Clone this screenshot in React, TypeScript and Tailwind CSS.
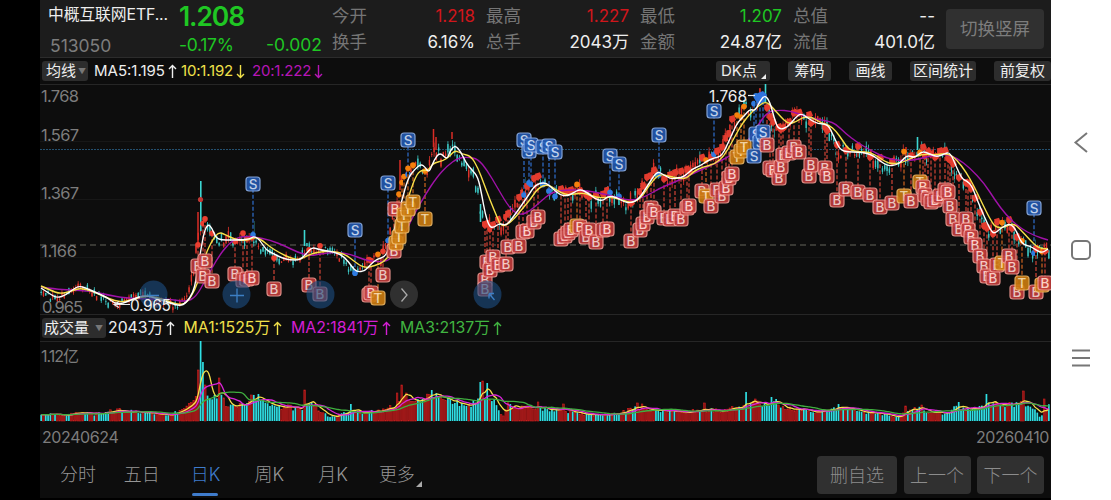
import type { ReactNode } from 'react';

type Point = [number, number];

const LEFT = 40;
const RIGHT = 1050;
const COUNT = 437;
const STEP = (RIGHT - LEFT) / COUNT;

// y positions of the moving averages along the time axis
const MA5 = '41,288 50,294 57,298 66,295 72,290 79,286 86,288 97,293 108,298 114,303 122,304 133,299 145,295 158,299 170,303 180,306 186,303 193,293 196,280 200,255 204,232 208,224 212,228 216,238 222,240 230,240 240,240 250,239 254,236 260,240 266,250 274,254 282,258 290,260 300,260 306,254 312,247 320,250 335,252 345,257 352,267 357,272 365,271 371,264 377,259 385,257 390,246 396,222 402,200 408,178 415,169 421,164 425,167 429,173 434,160 440,152 447,160 450,151 455,145 461,152 466,163 472,170 478,177 482,196 485,213 489,226 493,228 500,223 506,226 514,216 521,206 528,196 535,185 545,182 552,188 560,195 567,196 573,193 580,189 588,193 595,199 603,201 608,196 616,197 624,202 631,203 639,199 648,185 657,171 664,175 671,179 677,178 684,177 692,169 700,166 707,161 714,158 722,156 729,141 737,123 745,115 750,109 755,111 760,101 765,95 770,102 775,121 779,130 788,127 795,118 801,113 809,119 818,124 828,124 834,137 840,150 848,152 858,152 866,153 874,156 880,161 888,166 896,165 901,162 907,155 915,158 922,151 930,154 937,157 944,154 950,152 956,166 962,179 967,181 972,186 978,202 984,216 990,229 994,234 1000,229 1006,225 1011,224 1016,230 1020,240 1024,245 1030,246 1036,250 1042,253 1048,249';
const MA10 = '41,286 50,290 60,294 72,291 80,288 92,291 103,296 115,301 125,302 140,297 152,296 165,300 178,305 187,303 195,290 200,275 206,253 213,239 219,232 226,235 234,239 245,241 255,237 262,240 270,247 280,253 290,258 300,260 308,255 318,252 332,251 345,254 355,262 364,268 374,266 384,262 391,253 398,231 406,205 414,180 420,170 428,171 433,163 443,161 450,156 455,150 462,154 471,156 478,168 484,184 490,200 497,217 501,226 507,225 515,218 522,209 530,200 538,188 548,184 556,190 566,195 574,194 584,193 592,196 600,198 612,197 625,201 633,203 642,197 650,184 659,174 668,176 677,178 686,179 694,171 703,167 715,164 724,156 732,142 740,127 748,116 757,107 766,101 773,108 780,116 788,124 796,122 803,117 812,117 821,123 829,125 836,131 843,141 849,150 860,152 870,152 880,158 889,164 902,163 911,158 923,154 935,155 948,153 957,160 966,172 974,186 982,203 990,219 996,228 1006,227 1013,223 1020,229 1030,240 1038,248 1048,249';
const MA20 = '41,287 55,289 70,290 90,291 108,295 125,298 150,299 170,299 186,302 196,297 206,279 217,259 228,244 240,236 255,237 270,240 285,246 297,252 310,256 320,254 335,252 350,254 362,259 375,262 390,261 400,245 412,218 425,195 437,177 447,166 458,158 468,157 478,159 487,170 497,187 507,204 514,212 521,215 530,211 540,202 552,192 565,190 580,190 595,192 612,196 630,201 645,197 660,188 675,182 690,175 705,168 718,162 732,155 745,145 757,127 767,112 779,110 790,111 802,115 815,119 828,121 836,124 845,133 858,143 872,151 886,158 900,161 915,160 930,156 945,154 957,158 970,168 984,183 995,200 1006,215 1020,228 1035,236 1048,240';

const VOLUME = '41,7 60,6 80,8 95,7 110,11 120,11 135,9 150,8 160,7 170,6 178,10 186,15 190,20 195,28 206,34 210,29 214,26 218,23 223,24 228,14 238,14 245,20 253,24 262,21 275,15 290,14 300,11 310,18 320,10 330,4 340,7 350,9 370,9 385,13 395,16 399,24 405,24 415,22 425,26 436,26 445,20 455,21 465,15 475,19 480,20 493,22 497,18 502,3 508,17 518,14 530,13 545,13 560,11 575,8 590,6 605,7 620,8 637,14 650,11 665,11 680,8 690,11 705,12 720,10 735,14 745,15 760,18 772,20 785,12 800,12 815,9 830,11 840,14 855,10 870,8 885,7 895,4 905,8 918,13 930,9 945,8 957,14 970,12 980,13 990,20 1000,14 1012,16 1025,18 1035,13 1040,4 1048,16';

// Tall bars, marked r for a rising day and g for a falling one
const VOLUME_PEAKS: Record<number, [number, 'r' | 'g']> = {
  68: [51, 'r'], 69: [80, 'g'], 70: [59, 'g'], 71: [36, 'r'], 77: [43, 'r'], 91: [26, 'r'],
  94: [27, 'g'], 114: [31, 'r'], 134: [17, 'g'], 154: [28, 'r'], 156: [36, 'r'], 169: [31, 'g'],
  171: [28, 'g'], 190: [39, 'g'], 191: [40, 'r'], 193: [38, 'g'], 215: [19, 'r'], 226: [17, 'r'],
  258: [18, 'r'], 260: [17, 'r'], 287: [18, 'r'], 305: [29, 'g'], 309: [22, 'r'], 316: [24, 'g'],
  318: [22, 'g'], 345: [17, 'g'], 374: [15, 'r'], 381: [16, 'r'], 397: [19, 'g'], 409: [27, 'g'],
  425: [30, 'r'], 434: [22, 'r'],
};

const parse = (s: string): Point[] => s.split(' ').map((p) => p.split(',').map(Number) as Point);

const valueAt = (pts: Point[], x: number) => {
  if (x <= pts[0][0]) return pts[0][1];
  for (let i = 1; i < pts.length; i++) {
    if (x <= pts[i][0]) {
      const [x0, y0] = pts[i - 1];
      const [x1, y1] = pts[i];
      return y0 + ((y1 - y0) * (x - x0)) / (x1 - x0);
    }
  }
  return pts[pts.length - 1][1];
};

const smooth = (pts: Point[]) => {
  let d = `M${pts[0][0]} ${pts[0][1]}`;
  for (let i = 1; i < pts.length - 1; i++) {
    const mx = (pts[i][0] + pts[i + 1][0]) / 2;
    const my = (pts[i][1] + pts[i + 1][1]) / 2;
    d += `Q${pts[i][0]} ${pts[i][1]} ${mx} ${my}`;
  }
  const last = pts[pts.length - 1];
  return `${d}L${last[0]} ${last[1]}`;
};

const rand = (n: number) => {
  const v = Math.sin(n * 127.1 + 11.7) * 43758.5453;
  return v - Math.floor(v);
};

const ma5 = parse(MA5);
const ma10 = parse(MA10);
const ma20 = parse(MA20);
const volumePts = parse(VOLUME);

const priceAt = (x: number) => valueAt(ma5, x + 4);

const candles = Array.from({ length: COUNT }, (_, i) => {
  const x = LEFT + (i + 0.5) * STEP;
  const slope = priceAt(x + 3) - priceAt(x - 3);
  const calm = x < 190 || (x > 255 && x < 380) ? 0.6 : 0.95;
  const mid = priceAt(x) + (rand(i) - 0.5) * 13 * calm;
  const body = (0.6 + rand(i + 900) * 4) * calm;
  const wick = body + rand(i + 1800) * 5 * calm;
  const up = rand(i + 2700) - slope * 0.04 > 0.5;
  return { x, mid, body, wick, up };
});

const volumes = candles.map((c, i) => {
  const peak = VOLUME_PEAKS[i];
  return peak ? peak[0] : valueAt(volumePts, c.x) * (0.78 + rand(i + 5000) * 0.4);
});

const average = (n: number): Point[] =>
  volumes.map((_, i) => {
    const part = volumes.slice(Math.max(0, i - n + 1), i + 1);
    return [candles[i].x, 421 - part.reduce((a, b) => a + b, 0) / part.length];
  });

const SELL = '253,184 355,230 388,183 408,140 524,140 529,151 531,145 543,147 549,146 555,152 610,156 619,164 659,135 714,111 756,134 760,142 763,132 754,156 1034,208';
const BUY = '198,266 205,261 203,276 212,281 235,274 243,280 247,279 252,278 274,289 309,285 320,294 369,295 371,293 383,275 394,251 395,209 485,280 485,289 487,262 490,270 493,257 498,265 506,264 508,247 519,246 523,232 527,231 534,222 538,217 561,239 565,236 568,233 571,230 580,227 586,237 589,230 596,242 603,230 607,229 631,241 640,230 643,224 647,217 651,208 654,212 664,218 670,219 675,216 681,219 687,208 689,206 702,191 711,206 717,190 722,196 726,188 729,178 732,174 767,145 770,168 773,170 779,178 781,167 783,155 789,153 794,147 799,152 809,176 811,165 825,168 827,176 837,200 846,189 858,192 870,195 880,207 892,203 911,201 923,187 925,195 928,199 931,202 935,200 940,196 945,190 948,192 950,206 953,219 959,229 966,219 968,230 971,237 975,245 980,256 984,266 987,276 993,278 997,265 1009,256 1012,267 1017,292 1036,292 1045,283';
const TRADE = '378,298 396,243 399,237 402,226 404,215 408,209 413,202 425,219 577,226 706,196 737,157 741,151 744,147 904,196 920,182 1002,263 1022,283 1042,285';

const STYLES = {
  S: { fill: '#2459b0', edge: '#8fb2ea', text: '#d3e3ff', dot: '#2f7be0', dash: '#2f6fcf' },
  B: { fill: '#c23c3c', edge: '#f29a92', text: '#ffd8d2', dot: '#ea3f30', dash: '#cf4336' },
  T: { fill: '#cc7c10', edge: '#f0b863', text: '#ffe3b0', dot: '#f5800c', dash: '#cf641f' },
};

const markers = [
  ...parse(SELL).map(([x, y]) => ({ kind: 'S' as const, x, y })),
  ...parse(BUY).map(([x, y]) => ({ kind: 'B' as const, x, y })),
  ...parse(TRADE).map(([x, y]) => ({ kind: 'T' as const, x, y })),
].sort((a, b) => a.x - b.x);

const PriceChart = () => (
  <svg className="block" width="1011" height="231" viewBox="40 84 1011 231">
    {[84.5, 141.5, 199.5, 257.5, 314.5].map((y) => (
      <line key={y} x1="40" x2="1051" y1={y} y2={y} stroke={y === 84.5 || y === 314.5 ? '#262626' : '#171717'} />
    ))}
    <line x1="40" x2="1051" y1="149.5" y2="149.5" stroke="#24506f" strokeDasharray="2 1" />
    <line x1="40" x2="1051" y1="245" y2="245" stroke="#66665c" strokeDasharray="6 4" />

    {/* Candles */}
    {candles.map((c, i) => (
      <g key={i} fill={c.up ? '#e0332b' : '#3cc7c4'}>
        <rect x={c.x - 0.4} y={c.mid - c.wick} width="0.8" height={c.wick * 2} />
        <rect x={c.x - 0.7} y={c.mid - c.body} width="1.4" height={c.body * 2} />
      </g>
    ))}
    <path d="M200.8 181V231M253.5 221V236M304.5 230V246M765.5 84V103M744 100V112M480.5 204V222M524.5 177V195M917.5 137V150" stroke="#3cd6d2" strokeWidth="1.6" />
    <path d="M198 212V247M433.5 129V147M452 132V139M436 137V150M400 160V190M906 147V158" stroke="#d92c26" strokeWidth="1.5" />

    {/* Signal lines and dots */}
    {markers.map((m, i) => {
      const y = priceAt(m.x) + (rand(i + 300) - 0.7) * 9;
      const s = STYLES[m.kind];
      return (
        <g key={i}>
          <line x1={m.x} x2={m.x} y1={y} y2={m.y} stroke="#0d0d0d" strokeWidth="2" />
          <line x1={m.x} x2={m.x} y1={y} y2={m.y} stroke={s.dash} strokeWidth="1.2" strokeDasharray="4 2" />
          <circle cx={m.x} cy={y} r="2.8" fill={s.dot} />
          {m.kind === 'B' && m.x > 480 && (
            <path d={`M${m.x - 3} ${y - 3}l5-1.5 2 5-5 3z`} fill="#e23b2e" />
          )}
        </g>
      );
    })}
    <circle cx="200.5" cy="199.5" r="2.6" fill="#c23a35" />
    <path d="M754 98l4-5 5-2 4 4-3 7-6 3z" fill="#2f73dc" />

    {/* Averages */}
    <g fill="none" strokeWidth="1.4">
      <path d={smooth(ma20)} stroke="#a012a8" />
      <path d={smooth(ma10)} stroke="#f7e04a" />
      <path d={smooth(ma5)} stroke="#fff" />
    </g>

    {/* Signal badges */}
    {markers.map((m, i) => {
      const s = STYLES[m.kind];
      return (
        <g key={i} opacity="0.9">
          <rect x={m.x - 7} y={m.y - 7} width="14" height="14" rx="3" fill={s.fill} stroke={s.edge} strokeWidth="1.2" />
          <text x={m.x} y={m.y + 4.8} textAnchor="middle" fontSize="13.5" fontWeight="500" fill={s.text}>{m.kind}</text>
        </g>
      );
    })}

    {/* Floating controls */}
    <g fill="#1d4c80" opacity="0.62">
      <circle cx="153.5" cy="294.5" r="14" />
      <circle cx="236.5" cy="294.5" r="14" />
      <circle cx="320.5" cy="294.5" r="14" />
      <circle cx="487.5" cy="294.5" r="14" />
    </g>
    <circle cx="404" cy="294.5" r="14" fill="#333" opacity="0.92" />
    <path d="M401.5 288.5l5.5 6.500-5.5 6.500" fill="none" stroke="#aaa" strokeWidth="1.3" />
    <path d="M148 295.5h11M230 295.5h14M237 288.5v14M489 293.5h5M489 293.5v5M489 293.5l5.5 6.500" fill="none" stroke="#3d7fc4" strokeWidth="1.3" />

    {/* High and low labels */}
    <g fill="none" stroke="#e8e8e8" strokeWidth="1.2">
      <path d="M748 95.5h7" />
      <path d="M114 304.5h16M119 301.5l-5 3 5 3" />
    </g>
    <text x="709" y="101.5" fontSize="15.5" textLength="38" fill="#eee">1.768</text>
    <text x="130" y="310.5" fontSize="15.5" textLength="41" fill="#eee">0.965</text>

    {/* Price scale */}
    <g fontSize="16.5" fill="#7d7d7d">
      <text x="41" y="102" textLength="38">1.768</text>
      <text x="41" y="141" textLength="38">1.567</text>
      <text x="41" y="199" textLength="38">1.367</text>
      <text x="41" y="257" textLength="36">1.166</text>
      <text x="42" y="313" textLength="41">0.965</text>
    </g>
  </svg>
);

const VolumeChart = () => (
  <svg className="block" width="1011" height="81" viewBox="40 341 1011 81">
    <line x1="40" x2="1051" y1="341.5" y2="341.5" stroke="#262626" />
    {candles.map((c, i) => {
      const up = VOLUME_PEAKS[i] ? VOLUME_PEAKS[i][1] === 'r' : c.up;
      const h = volumes[i];
      return up ? (
        <rect key={i} x={c.x - 0.8} y={421 - h} width="1.6" height={h} fill="#8f1515" stroke="#c91f1f" strokeWidth="0.6" />
      ) : (
        <rect key={i} x={c.x - 0.85} y={421 - h} width="1.7" height={h} fill="#2fdfe4" />
      );
    })}
    <g fill="none" strokeWidth="1.3">
      <path d={smooth(average(5))} stroke="#f7e04a" />
      <path d={smooth(average(10))} stroke="#d824d8" />
      <path d={smooth(average(20))} stroke="#3fae3f" />
    </g>
    <text x="41" y="362" fontSize="16" textLength="38" fill="#7d7d7d">1.12亿</text>
  </svg>
);

const Arrow = ({ down = false }: { down?: boolean }) => (
  <svg className={down ? 'ml-[3px] rotate-180' : 'ml-[3px]'} width="9" height="15" viewBox="0 0 9 15" fill="none" stroke="currentColor" strokeWidth="1.4">
    <path d="M4.500 14V1.500M1 5l3.500-3.500L8 5" />
  </svg>
);

const Legend = ({ className, down, children }: { className: string; down?: boolean; children: ReactNode }) => (
  <span className={`flex shrink-0 items-center whitespace-nowrap ${className}`}>
    {children}
    <Arrow down={down} />
  </span>
);

const quotes = [
  { top: ['今开', '1.218', 'text-[#d0161b]'], bottom: ['换手', '6.16%'], width: 'w-[143px]' },
  { top: ['最高', '1.227', 'text-[#d0161b]'], bottom: ['总手', '2043万'], width: 'w-[143px]' },
  { top: ['最低', '1.207', 'text-[#1fc723]'], bottom: ['金额', '24.87亿'], width: 'w-[142px]' },
  { top: ['总值', '--', 'text-[#eee]'], bottom: ['流值', '401.0亿'], width: 'w-[142px]' },
];

const Header = () => (
  <header className="flex h-[58px] shrink-0 border-b border-[#2c2c2c] bg-[#1c1c1c]">
    <div className="flex w-[139px] flex-col pl-[8px]">
      <span className="mt-[3px] h-[23px] text-[15.8px] leading-[23px] tracking-[-0.1px] whitespace-nowrap text-[#eee]">中概互联网ETF...</span>
      <span className="mt-[8px] pl-[2px] text-[17.5px] leading-6 text-[#7d7d7d]">513050</span>
    </div>
    <div className="w-[153px] text-[#1fc723]">
      <div className="mt-px h-[31px] text-[26.5px] leading-[31px] font-semibold tracking-[-1.1px]">1.208</div>
      <div className="flex w-[143px] justify-between text-[17.5px] leading-[25px]">
        <span className="tracking-[-0.3px]">-0.17%</span>
        <span>-0.002</span>
      </div>
    </div>
    <div className="flex gap-[11px]">
      {quotes.map((q) => (
        <div key={q.top[0]} className={`${q.width} pt-[3px] text-[17px] leading-[26px]`}>
          <div className="flex justify-between">
            <span className="text-[17.5px] text-[#757575]">{q.top[0]}</span>
            <span className={q.top[2]}>{q.top[1]}</span>
          </div>
          <div className="flex justify-between">
            <span className="text-[17.5px] text-[#757575]">{q.bottom[0]}</span>
            <span className="text-[#eee]">{q.bottom[1]}</span>
          </div>
        </div>
      ))}
    </div>
    <button className="mt-[9px] ml-[11px] h-10 w-[98px] rounded bg-[#303030] text-[17.5px] text-[#7d7d7d]">切换竖屏</button>
  </header>
);

const tools = [
  { label: '筹码', width: 'w-[43px]' },
  { label: '画线', width: 'w-[43px]' },
  { label: '区间统计', width: 'w-[66px]' },
  { label: '前复权', width: 'w-[57px]' },
];

const Toolbar = () => (
  <div className="flex h-[26px] shrink-0 items-center pl-0.5 text-[15px] text-[#eee]">
    <button className="flex h-5 w-[46px] items-center rounded-[3px] bg-[#2d2d2d] pl-1">
      均线
      <span className="ml-0.5 text-[8px] text-[#777]">▼</span>
    </button>
    <Legend className="ml-[6px] w-[87px]">MA5:1.195</Legend>
    <Legend className="w-[71px] tracking-[-0.2px] text-[#f0e04a]" down>10:1.192</Legend>
    <Legend className="tracking-[-0.2px] text-[#b516b5]" down>20:1.222</Legend>
    <div className="ml-auto flex gap-[18px]">
      <button className="flex h-5 w-[54px] items-center rounded-[3px] bg-[#2d2d2d] pl-[5px]">
        DK点
        <span className="mt-2.5 ml-1 border-b-[5px] border-l-[5px] border-b-[#eee] border-l-transparent" />
      </button>
      {tools.map((t) => (
        <button key={t.label} className={`h-5 ${t.width} rounded-[3px] bg-[#2d2d2d] text-center leading-5 whitespace-nowrap`}>{t.label}</button>
      ))}
    </div>
  </div>
);

const VolumeBar = () => (
  <div className="flex h-[26px] shrink-0 items-center pl-0.5 text-[15.8px] text-[#eee]">
    <button className="flex h-5 w-[64px] items-center rounded-[3px] bg-[#2d2d2d] pl-0.5 text-[15px]">
      成交量
      <span className="ml-1.5 text-[8px] text-[#777]">▼</span>
    </button>
    <Legend className="ml-[2px] w-[75.5px]">2043万</Legend>
    <Legend className="w-[107.5px] text-[#f0e04a]">MA1:1525万</Legend>
    <Legend className="w-[109px] text-[#d41fd4]">MA2:1841万</Legend>
    <Legend className="text-[#41b541]">MA3:2137万</Legend>
  </div>
);

const tabs = ['分时', '五日', '日K', '周K', '月K', '更多'];

const Footer = () => (
  <footer className="flex h-[52px] shrink-0 items-start border-b-2 border-black pt-2 pr-[7px] text-[18px] text-[#969696]">
    <nav className="flex pl-[6px]">
      {tabs.map((t) => (
        <div key={t} className="flex h-10 w-[63.8px] flex-col items-center font-light">
          <span className={t === '日K' ? 'h-[37px] leading-[37px] text-[#3f7ccc]' : 'relative h-[37px] leading-[37px]'}>
            {t}
            {t === '更多' && (
              <span className="absolute -right-[7px] bottom-[6px] border-b-[6px] border-l-[6px] border-b-[#aaa] border-l-transparent" />
            )}
          </span>
          {t === '日K' && <span className="h-[3px] w-[26px] rounded bg-[#3f7ccc]" />}
        </div>
      ))}
    </nav>
    <div className="ml-auto flex gap-[6.5px] font-light text-[#8c8c8c]">
      <button className="h-[38px] w-20 rounded bg-[#303030]">删自选</button>
      <button className="h-[38px] w-[67px] rounded bg-[#303030]">上一个</button>
      <button className="h-[38px] w-[67px] rounded bg-[#303030]">下一个</button>
    </div>
  </footer>
);

const SystemBar = () => (
  <aside className="flex w-[60px] flex-col items-center bg-white">
    <svg width="60" height="500" viewBox="0 0 60 500" fill="none" stroke="#777" strokeWidth="2">
      <path d="M36 133l-11.500 9.500L36 152" />
      <rect x="21" y="241" width="18" height="18" rx="4" />
      <path d="M21 350.500h18M21 358h18M21 365.500h18" />
    </svg>
  </aside>
);

export default function App() {
  return (
    <div className="flex h-[500px] w-[1111px] overflow-hidden bg-black font-['Inter','Noto_Sans_CJK_SC',sans-serif]">
      <main className="ml-10 flex w-[1011px] flex-col bg-[#0d0d0d]">
        <Header />
        <Toolbar />
        <PriceChart />
        <VolumeBar />
        <VolumeChart />
        <div className="flex h-[26px] shrink-0 items-center justify-between pt-1 pr-[2px] pl-[2px] text-[16px] tracking-[-0.4px] text-[#7d7d7d]">
          <span>20240624</span>
          <span>20260410</span>
        </div>
        <Footer />
      </main>
      <SystemBar />
    </div>
  );
}
